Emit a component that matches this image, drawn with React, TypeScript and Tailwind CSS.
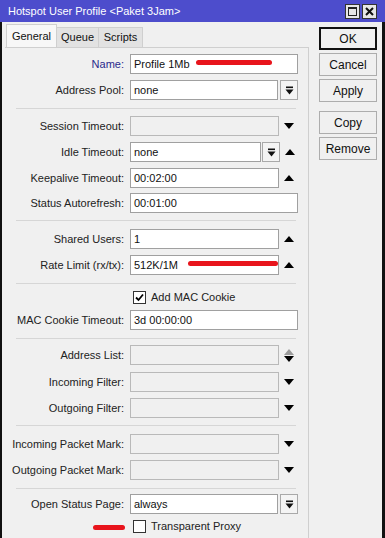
import React from "react";

const font = { fontFamily: '"Liberation Sans", Arial, sans-serif' };

function Up({ gray = false }: { gray?: boolean }) {
  return (
    <svg width="10" height="6" viewBox="0 0 10 6">
      <polygon points="0,6 10,6 5,0" fill={gray ? "#9a9a9a" : "#000"} />
    </svg>
  );
}
function Down() {
  return (
    <svg width="10" height="6" viewBox="0 0 10 6">
      <polygon points="0,0 10,0 5,6" fill="#000" />
    </svg>
  );
}
function ComboBtn() {
  return (
    <div className="w-[18px] h-[20px] border border-[#a9a9a9] bg-[#f4f4f4] flex items-center justify-center shrink-0">
      <svg width="9" height="9" viewBox="0 0 9 9">
        <rect x="1" y="0.5" width="7" height="1.6" fill="#111" />
        <polygon points="0.5,3.5 8.5,3.5 4.5,8.5" fill="#111" />
      </svg>
    </div>
  );
}

type Kind = "full" | "arrow" | "combo" | "comboArrow";

function Row({
  label,
  value = "",
  mt,
  kind = "full",
  disabled = false,
  arrow = "up",
  labelClass = "text-[#222]",
}: {
  label: string;
  value?: string;
  mt: string;
  kind?: Kind;
  disabled?: boolean;
  arrow?: "up" | "down" | "updown";
  labelClass?: string;
}) {
  const inputBase =
    "h-[20px] border flex items-center pl-[3px] text-[11px] text-[#111] whitespace-nowrap " +
    (disabled ? "bg-[#f0f0f0] border-[#b9b9b9]" : "bg-white border-[#a0a0a0]");
  const arrowEl =
    arrow === "up" ? (
      <Up />
    ) : arrow === "down" ? (
      <Down />
    ) : (
      <div className="flex flex-col gap-[1px]">
        <Up gray />
        <Down />
      </div>
    );
  return (
    <div className={"flex items-center h-[20px] " + mt}>
      <div className={"w-[120px] text-right pr-[1px] text-[11px] whitespace-nowrap " + labelClass}>{label}</div>
      <div className="ml-[5px] flex items-center">
        {kind === "full" && <div className={inputBase + " w-[168px]"}>{value}</div>}
        {kind === "arrow" && (
          <>
            <div className={inputBase + " w-[149px]"}>{value}</div>
            <div className="w-[19px] flex justify-center">{arrowEl}</div>
          </>
        )}
        {kind === "combo" && (
          <>
            <div className={inputBase + " w-[148px]"}>{value}</div>
            <div className="ml-[2px]">
              <ComboBtn />
            </div>
          </>
        )}
        {kind === "comboArrow" && (
          <>
            <div className={inputBase + " w-[131px]"}>{value}</div>
            <div className="ml-[1px]">
              <ComboBtn />
            </div>
            <div className="w-[19px] flex justify-center">{arrowEl}</div>
          </>
        )}
      </div>
    </div>
  );
}

function Sep({ mt }: { mt: string }) {
  return <div className={"ml-[11px] w-[280px] border-t border-[#d6d6d6] " + mt} />;
}

function Check({ checked, label, mt }: { checked: boolean; label: string; mt: string }) {
  return (
    <div className={"flex items-center h-[16px] " + mt}>
      <div className="w-[128px]" />
      <div className="w-[13px] h-[13px] border border-[#333] bg-white flex items-center justify-center">
        {checked && (
          <svg width="9" height="9" viewBox="0 0 9 9">
            <polyline points="1,4.5 3.5,7 8,1.5" fill="none" stroke="#000" strokeWidth="1.8" />
          </svg>
        )}
      </div>
      <div className="ml-[5px] text-[11px] text-[#222] whitespace-nowrap">{label}</div>
    </div>
  );
}

function Btn({ label, mt, def = false }: { label: string; mt: string; def?: boolean }) {
  return (
    <div
      className={
        "w-[58px] h-[23px] flex items-center justify-center text-[12px] text-[#111] bg-[#f0f0f0] " +
        (def ? "border-2 border-[#111] " : "border border-[#adadad] ") +
        mt
      }
    >
      {label}
    </div>
  );
}

export default function App() {
  return (
    <div className="w-[385px] h-[538px] overflow-hidden bg-[#f0f0f0] relative flex flex-col" style={font}>
      {/* title bar */}
      <div className="h-[22px] bg-[#4d4dcc] flex items-center pl-[8px] pr-[8px] shrink-0">
        <div className="text-white text-[11px] flex-1 whitespace-nowrap">Hotspot User Profile &lt;Paket 3Jam&gt;</div>
        <div className="flex gap-[2px]">
          <div className="w-[15px] h-[15px] bg-[#e6e6e6] border border-[#333] flex items-center justify-center">
            <div className="w-[9px] h-[9px] border border-[#222] border-t-2" />
          </div>
          <div className="w-[15px] h-[15px] bg-[#e6e6e6] border border-[#333] flex items-center justify-center">
            <svg width="9" height="9" viewBox="0 0 9 9">
              <path d="M1 1 L8 8 M8 1 L1 8" stroke="#111" strokeWidth="2" />
            </svg>
          </div>
        </div>
      </div>
      {/* body */}
      <div className="flex-1 flex border-l-2 border-r-[3px] border-[#111]">
        <div className="flex flex-col w-[304px] ml-[3px]">
          {/* tabs */}
          <div className="flex items-end h-[24px] mt-[1px] pl-[1px]">
            <div className="h-[23px] w-[51px] border border-b-0 border-[#cfcfcf] bg-[#f7f7f7] flex items-center justify-center text-[11px] text-[#111]">
              General
            </div>
            <div className="h-[20px] w-[42px] border border-l-0 border-b-0 border-[#cfcfcf] bg-[#e2e2e2] flex items-center justify-center text-[11px] text-[#111]">
              Queue
            </div>
            <div className="h-[20px] w-[44px] border border-l-0 border-b-0 border-[#cfcfcf] bg-[#e2e2e2] flex items-center justify-center text-[11px] text-[#111]">
              Scripts
            </div>
          </div>
          {/* panel */}
          <div className="flex-1 border-t border-r border-[#cfcfcf] flex flex-col">
            <Row label="Name:" value="Profile 1Mb" mt="mt-[6px]" labelClass="text-[#2a2a8c]" />
            <Row label="Address Pool:" value="none" mt="mt-[6px]" kind="combo" />
            <Sep mt="mt-[8px]" />
            <Row label="Session Timeout:" mt="mt-[7px]" kind="arrow" disabled arrow="down" />
            <Row label="Idle Timeout:" value="none" mt="mt-[6px]" kind="comboArrow" />
            <Row label="Keepalive Timeout:" value="00:02:00" mt="mt-[6px]" kind="arrow" />
            <Row label="Status Autorefresh:" value="00:01:00" mt="mt-[5px]" />
            <Sep mt="mt-[7px]" />
            <Row label="Shared Users:" value="1" mt="mt-[8px]" kind="arrow" />
            <Row label="Rate Limit (rx/tx):" value="512K/1M" mt="mt-[6px]" kind="arrow" />
            <Sep mt="mt-[8px]" />
            <Check checked label="Add MAC Cookie" mt="mt-[5px]" />
            <Row label="MAC Cookie Timeout:" value="3d 00:00:00" mt="mt-[5px]" />
            <Sep mt="mt-[8px]" />
            <Row label="Address List:" mt="mt-[6px]" kind="arrow" disabled arrow="updown" />
            <Row label="Incoming Filter:" mt="mt-[7px]" kind="arrow" disabled arrow="down" />
            <Row label="Outgoing Filter:" mt="mt-[6px]" kind="arrow" disabled arrow="down" />
            <Sep mt="mt-[7px]" />
            <Row label="Incoming Packet Mark:" mt="mt-[8px]" kind="arrow" disabled arrow="down" />
            <Row label="Outgoing Packet Mark:" mt="mt-[6px]" kind="arrow" disabled arrow="down" />
            <Sep mt="mt-[8px]" />
            <Row label="Open Status Page:" value="always" mt="mt-[5px]" kind="combo" />
            <Check checked={false} label="Transparent Proxy" mt="mt-[4px]" />
          </div>
        </div>
        {/* buttons */}
        <div className="flex flex-col ml-[10px]">
          <Btn label="OK" mt="mt-[5px]" def />
          <Btn label="Cancel" mt="mt-[3px]" />
          <Btn label="Apply" mt="mt-[3px]" />
          <Btn label="Copy" mt="mt-[9px]" />
          <Btn label="Remove" mt="mt-[3px]" />
        </div>
      </div>
      {/* red annotation strokes */}
      <div className="absolute left-[196px] top-[60px] w-[76px] h-[5px] rounded-full bg-[#e8141c]" />
      <div className="absolute left-[188px] top-[261px] w-[90px] h-[5px] rounded-full bg-[#e8141c]" />
      <div className="absolute left-[93px] top-[525px] w-[32px] h-[5px] rounded-full bg-[#e8141c]" />
    </div>
  );
}
